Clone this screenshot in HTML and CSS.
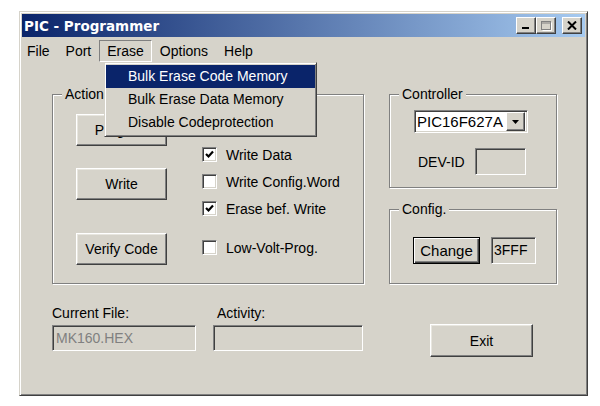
FILE: index.html
```html
<!DOCTYPE html>
<html lang="en">
<head>
    <meta charset="UTF-8">
    <meta name="viewport" content="width=device-width, initial-scale=1.0">
    <title>PIC - Programmer</title>
    <link rel="stylesheet" href="styles.css">
</head>
<body>

    <div class="window">
        <div class="title-bar">
            <span class="title">PIC - Programmer</span>
            <div class="title-buttons">
                <button class="tb-btn">
                    <svg width="8" height="8" viewBox="0 0 8 8"><rect x="0" y="5" width="7" height="2" fill="#000"/></svg>
                </button>
                <button class="tb-btn tb-max">
                    <svg width="11" height="10" viewBox="0 0 11 10"><rect x="0.5" y="0.5" width="9" height="8" fill="none" stroke="#808080"/><rect x="0.5" y="1.5" width="9" height="1" fill="#808080"/><path d="M10.5 1.5v8h-9" fill="none" stroke="#fff"/></svg>
                </button>
                <button class="tb-btn tb-close">
                    <svg width="10" height="9" viewBox="0 0 10 9"><path d="M1 0.5l8 8M9 0.5l-8 8" stroke="#000" stroke-width="2"/></svg>
                </button>
            </div>
        </div>

        <div class="menu-bar">
            <span class="menu-item first">File</span>
            <span class="menu-item">Port</span>
            <span class="menu-item open">Erase</span>
            <span class="menu-item">Options</span>
            <span class="menu-item">Help</span>
        </div>

        <!-- open Erase menu -->
        <div class="menu-popup">
            <div class="popup-item active">Bulk Erase Code Memory</div>
            <div class="popup-item">Bulk Erase Data Memory</div>
            <div class="popup-item">Disable Codeprotection</div>
        </div>

        <div class="client">
            <fieldset class="group actions">
                <legend>Actions</legend>
                <div class="actions-body">
                    <div class="action-buttons">
                        <button class="btn btn-program">Program</button>
                        <button class="btn btn-write">Write</button>
                        <button class="btn btn-verify">Verify Code</button>
                    </div>
                    <div class="options">
                        <div class="check"><span class="box"><svg width="9" height="9" viewBox="0 0 9 9"><path d="M1 4l2.5 2.5L8 1.5" fill="none" stroke="#000" stroke-width="2.2"/></svg></span>Write Data</div>
                        <div class="check"><span class="box"></span>Write Config.Word</div>
                        <div class="check"><span class="box"><svg width="9" height="9" viewBox="0 0 9 9"><path d="M1 4l2.5 2.5L8 1.5" fill="none" stroke="#000" stroke-width="2.2"/></svg></span>Erase bef. Write</div>
                        <div class="check check-lvp"><span class="box"></span>Low-Volt-Prog.</div>
                    </div>
                </div>
            </fieldset>

            <div class="side">
                <fieldset class="group controller">
                    <legend>Controller</legend>
                    <div class="combo">
                        <span class="combo-text">PIC16F627A</span>
                        <span class="combo-btn">
                            <svg width="8" height="4" viewBox="0 0 8 4"><path d="M0 0h7L3.5 4z" fill="#000"/></svg>
                        </span>
                    </div>
                    <div class="dev-row">
                        <span>DEV-ID</span>
                        <span class="sunken dev-id"></span>
                    </div>
                </fieldset>

                <fieldset class="group config">
                    <legend>Config.</legend>
                    <div class="config-row">
                        <button class="btn btn-default">Change</button>
                        <span class="sunken config-word">3FFF</span>
                    </div>
                </fieldset>
            </div>

            <div class="status">
                <div class="field current-file">
                    <div class="field-label">Current File:</div>
                    <div class="sunken field-box disabled">MK160.HEX</div>
                </div>
                <div class="field activity">
                    <div class="field-label">Activity:</div>
                    <div class="sunken field-box"></div>
                </div>
            </div>

            <div class="exit-cell">
                <button class="btn btn-exit">Exit</button>
            </div>
        </div>
    </div>

</body>
</html>
```

FILE: styles.css
```css
body {
    margin: 0;
    background-color: #fff;
    font-family: "Liberation Sans", Arial, sans-serif;
    font-size: 14px;
    color: #000;
}
.window {
    position: relative;
    width: 563px;
    height: 379px;
    margin: 11px 0 0 19px;
    padding: 2px;
    background: #d6d3ca;
    border: 1px solid;
    border-color: #d6d3ca #404040 #404040 #d6d3ca;
    box-shadow: inset 1px 1px 0 #fff, inset -1px -1px 0 #808080;
}
.title-bar {
    height: 23px;
    display: flex;
    align-items: center;
    justify-content: space-between;
    background: linear-gradient(to right, #0a246a, #a6caf0);
}
.title {
    padding-left: 2px;
    color: #fff;
    font-family: "DejaVu Sans", Verdana, sans-serif;
    font-weight: bold;
    font-size: 13.5px;
}
.title-buttons {
    display: flex;
    margin-right: 3px;
}
.tb-btn {
    width: 20px;
    height: 17px;
    padding: 0;
    display: flex;
    align-items: center;
    justify-content: center;
    background: #d6d3ca;
    border: 1px solid;
    border-color: #fff #404040 #404040 #fff;
    box-shadow: inset -1px -1px 0 #808080;
}
.tb-close {
    margin-left: 6px;
}
.menu-bar {
    height: 23px;
    padding-top: 3px;
    display: flex;
    align-items: flex-start;
}
.menu-item {
    height: 20px;
    line-height: 20px;
    padding: 0 7px;
    border: 1px solid transparent;
}
.menu-item.first {
    margin-left: -3px;
}
.menu-item.open {
    border-color: #808080 #fff #fff #808080;
}
.menu-popup {
    position: absolute;
    left: 84px;
    top: 50px;
    width: 209px;
    padding: 2px 1px;
    background: #d6d3ca;
    border: 1px solid;
    border-color: #d6d3ca #404040 #404040 #d6d3ca;
    box-shadow: inset 1px 1px 0 #fff, inset -1px -1px 0 #808080;
    z-index: 2;
}
.popup-item {
    height: 23px;
    line-height: 23px;
    padding-left: 22px;
}
.popup-item.active {
    background: #0a246a;
    color: #fff;
}
.client {
    display: grid;
    grid-template-columns: 312px 168px;
    column-gap: 25px;
    row-gap: 21px;
    padding: 23px 0 0 30px;
}
.group {
    box-sizing: border-box;
    margin: 0;
    padding: 0;
    border: 1px solid #808080;
    box-shadow: inset 1px 1px 0 #fff, 1px 1px 0 #fff;
}
.group legend {
    margin-left: 9px;
    padding: 0 3px;
    line-height: 16px;
    background: #d6d3ca;
}
.actions {
    height: 198px;
}
.actions-body {
    display: flex;
    padding-left: 23px;
}
.action-buttons {
    display: flex;
    flex-direction: column;
    width: 91px;
}
.btn {
    box-sizing: border-box;
    height: 32px;
    padding: 0;
    font-family: inherit;
    font-size: 14px;
    color: #000;
    background: #d6d3ca;
    border: 1px solid;
    border-color: #fff #404040 #404040 #fff;
    box-shadow: inset -1px -1px 0 #808080, inset 1px 1px 0 #e8e6df;
}
.btn-program {
    margin-top: 12px;
}
.btn-write {
    margin-top: 22px;
}
.btn-verify {
    margin-top: 33px;
}
.options {
    margin-left: 35px;
    padding-top: 39px;
}
.check {
    height: 27px;
    display: flex;
    align-items: center;
    white-space: nowrap;
}
.check-lvp {
    margin-top: 12px;
}
.box {
    box-sizing: border-box;
    width: 15px;
    height: 15px;
    margin-right: 9px;
    display: flex;
    align-items: center;
    justify-content: center;
    background: #fff;
    border: 1px solid;
    border-color: #808080 #fff #fff #808080;
    box-shadow: inset 1px 1px 0 #404040, inset -1px -1px 0 #d6d3ca;
}
.sunken {
    box-sizing: border-box;
    display: block;
    border: 1px solid;
    border-color: #808080 #fff #fff #808080;
    box-shadow: inset 1px 1px 0 #404040, inset -1px -1px 0 #d6d3ca;
}
.side {
    display: flex;
    flex-direction: column;
}
.controller {
    height: 102px;
}
.combo {
    box-sizing: border-box;
    width: 114px;
    height: 23px;
    margin: 8px 0 0 24px;
    display: flex;
    align-items: center;
    justify-content: space-between;
    background: #fff;
    border: 1px solid;
    border-color: #808080 #fff #fff #808080;
    box-shadow: inset 1px 1px 0 #404040, inset -1px -1px 0 #d6d3ca;
}
.combo-text {
    padding-left: 2px;
    font-size: 15px;
}
.combo-btn {
    box-sizing: border-box;
    width: 19px;
    height: 19px;
    margin-right: 2px;
    display: flex;
    align-items: center;
    justify-content: center;
    background: #d6d3ca;
    border: 1px solid;
    border-color: #fff #404040 #404040 #fff;
    box-shadow: inset -1px -1px 0 #808080;
}
.dev-row {
    display: flex;
    align-items: center;
    margin: 15px 0 0 28px;
}
.dev-id {
    width: 51px;
    height: 27px;
    margin-left: 10px;
}
.config {
    height: 83px;
    margin-top: 13px;
}
.config-row {
    display: flex;
    margin: 20px 0 0 23px;
}
.btn-default {
    width: 67px;
    height: 27px;
    font-size: 15px;
    border: 1px solid #000;
    box-shadow: inset 1px 1px 0 #fff, inset -1px -1px 0 #404040, inset -2px -2px 0 #808080;
}
.config-word {
    width: 45px;
    height: 27px;
    margin-left: 11px;
    padding-left: 2px;
    line-height: 25px;
}
.status {
    display: flex;
}
.field-label {
    line-height: 16px;
    margin-bottom: 4px;
}
.field-box {
    height: 26px;
    line-height: 24px;
    padding-left: 3px;
}
.field-box.disabled {
    color: #808080;
}
.current-file {
    width: 144px;
}
.activity {
    width: 150px;
    margin-left: 17px;
}
.activity .field-label {
    padding-left: 4px;
}
.exit-cell {
    padding: 19px 0 0 41px;
}
.btn-exit {
    width: 103px;
    height: 33px;
}
```
